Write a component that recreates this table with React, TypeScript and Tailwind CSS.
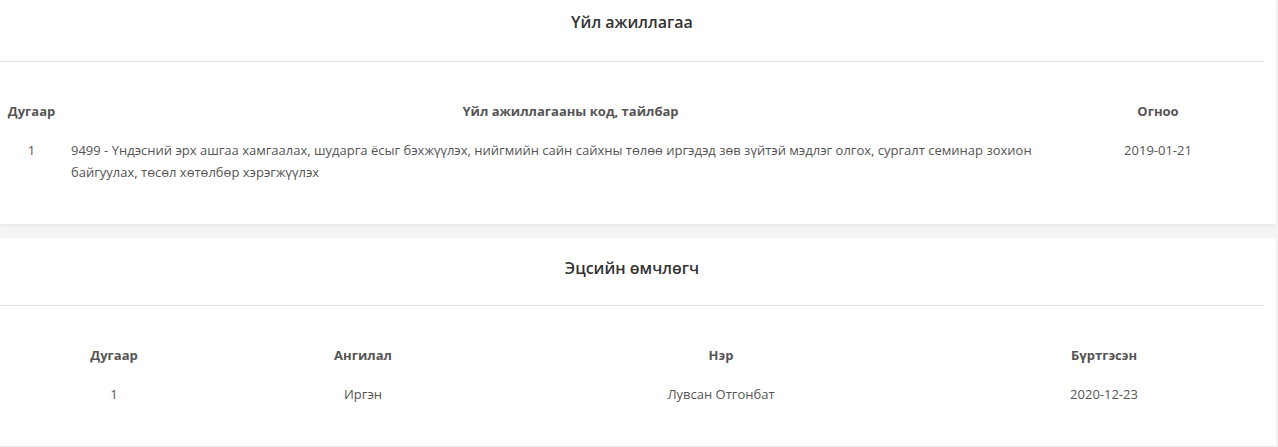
const activities = [
  {
    no: 1,
    text: "9499 - Үндэсний эрх ашгаа хамгаалах, шударга ёсыг бэхжүүлэх, нийгмийн сайн сайхны төлөө иргэдэд зөв зүйтэй мэдлэг олгох, сургалт семинар зохион байгуулах, төсөл хөтөлбөр хэрэгжүүлэх",
    date: "2019-01-21",
  },
];

const owners = [
  { no: 1, type: "Иргэн", name: "Лувсан Отгонбат", date: "2020-12-23" },
];

const Card = ({
  title,
  titleClass,
  children,
}: {
  title: string;
  titleClass: string;
  children: React.ReactNode;
}) => {
  return (
    <div className="mr-[2px] bg-white shadow-[0_2px_4px_rgba(0,0,0,0.06)]">
      <div className={`border-b border-[#e3e3e3] mr-[12px] ${titleClass}`}>
        <h2 className="text-center text-[16px] leading-[22px] font-semibold text-[#333]">
          {title}
        </h2>
      </div>
      <div className="pt-[31px] pb-[31px] text-[13px] leading-[22px] text-[#555]">
        {children}
      </div>
    </div>
  );
};

export default function App() {
  return (
    <div
      className="min-h-[447px] bg-[#f5f5f5] flex flex-col gap-[14px]"
      style={{ fontFamily: '"Open Sans", "Noto Sans", sans-serif' }}
    >
      <Card title="Үйл ажиллагаа" titleClass="pt-[11px] pb-[28px]">
        <table className="w-[1264px] table-fixed border-collapse">
          <colgroup>
            <col className="w-[63px]" />
            <col />
            <col className="w-[160px]" />
            <col className="w-[26px]" />
          </colgroup>
          <thead>
            <tr className="font-bold">
              <th className="py-[7px] text-center">Дугаар</th>
              <th className="py-[7px] text-center">Үйл ажиллагааны код, тайлбар</th>
              <th className="py-[7px] text-center">Огноо</th>
              <th />
            </tr>
          </thead>
          <tbody>
            {activities.map((a) => (
              <tr key={a.no}>
                <td className="py-[10px] text-center align-top">{a.no}</td>
                <td className="py-[10px] px-2 text-left align-top">{a.text}</td>
                <td className="py-[10px] text-center align-top">{a.date}</td>
                <td />
              </tr>
            ))}
          </tbody>
        </table>
      </Card>
      <Card title="Эцсийн өмчлөгч" titleClass="pt-[19px] pb-[26px]">
        <table className="w-[1264px] table-fixed border-collapse">
          <colgroup>
            <col className="w-[228px]" />
            <col className="w-[270px]" />
            <col className="w-[446px]" />
            <col />
          </colgroup>
          <thead>
            <tr className="font-bold">
              <th className="py-[7px] text-center">Дугаар</th>
              <th className="py-[7px] text-center">Ангилал</th>
              <th className="py-[7px] text-center">Нэр</th>
              <th className="py-[7px] text-center">Бүртгэсэн</th>
            </tr>
          </thead>
          <tbody>
            {owners.map((o) => (
              <tr key={o.no}>
                <td className="py-[10px] text-center">{o.no}</td>
                <td className="py-[10px] text-center">{o.type}</td>
                <td className="py-[10px] text-center">{o.name}</td>
                <td className="py-[10px] text-center">{o.date}</td>
              </tr>
            ))}
          </tbody>
        </table>
      </Card>
    </div>
  );
}
